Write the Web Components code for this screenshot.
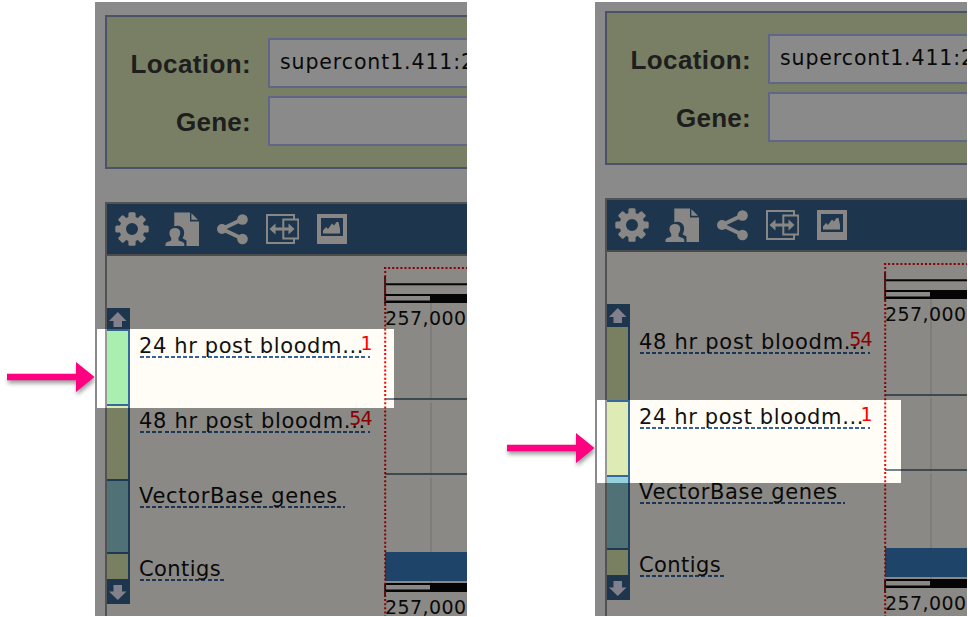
<!DOCTYPE html>
<html lang="en">
<head>
<meta charset="utf-8">
<title>Track ordering</title>
<style>
body { margin: 0; background: #fff; overflow: hidden; }
</style>
</head>
<body>
<track-comparison></track-comparison>
<script>
const sheet = (el, html) => { el.attachShadow({ mode: 'open' }).innerHTML = html; return el.shadowRoot; };

/* One line of text whose letter spacing is set so that it fills a given width. */
customElements.define('fit-text', class extends HTMLElement {
  connectedCallback() {
    const root = sheet(this, `<style>
      :host { display: block; white-space: pre; }
      span { display: inline-block; line-height: inherit; }
    </style><span></span>`);
    const span = root.querySelector('span');
    const text = this.getAttribute('text');
    span.textContent = text;
    const fit = parseFloat(this.getAttribute('fit'));
    span.style.letterSpacing = (fit - span.getBoundingClientRect().width) / text.length + 'px';
  }
});

customElements.define('form-field', class extends HTMLElement {
  connectedCallback() {
    sheet(this, `<style>
      :host { display: grid; grid-template: 50px / 144px 1fr; column-gap: 17px; height: 50px; }
      .label { display: flex; justify-content: flex-end; font: bold 26px/53px "Liberation Sans", sans-serif; color: #383838; }
      .input { border: 2px solid #afbcf8; background: #fff; padding-left: 10px; width: 400px; height: 50px; box-sizing: border-box;
               font: 20.500px/44px "DejaVu Sans", sans-serif; color: #111; }
    </style>
    <div class="label"><fit-text text="${this.getAttribute('label')}" fit="${this.getAttribute('fit')}"></fit-text></div>
    <div class="input"><slot></slot></div>`);
  }
});

customElements.define('location-form', class extends HTMLElement {
  connectedCallback() {
    sheet(this, `<style>
      :host { display: flex; flex-direction: column; gap: 8px; height: 154px; box-sizing: border-box;
              border: 2px solid #8998bd; border-right: 0; background: #dfebb9; padding-top: 21px; }
    </style>
    <form-field label="Location:" fit="120.5"><fit-text text="supercont1.411:2" fit="195"></fit-text></form-field>
    <form-field label="Gene:" fit="75"></form-field>`);
  }
});

customElements.define('tool-bar', class extends HTMLElement {
  connectedCallback() {
    const teeth = Array.from({ length: 8 }, (_, i) => `<rect x="13.4" y="0.3" width="7.2" height="8" rx="1.5" transform="rotate(${i * 45} 17 17)"/>`).join('');
    sheet(this, `<style>
      :host { display: flex; align-items: center; gap: 16px; height: 50px; padding-left: 8px; background: #36658f; }
      svg { flex: none; fill: #fdfaf5; stroke: none; }
    </style>
    <svg width="34" height="34">${teeth}<path fill-rule="evenodd" d="M17 4.5a12.5 12.5 0 1 0 0 25a12.5 12.5 0 1 0 0-25zM17 11a6 6 0 1 1 0 12a6 6 0 1 1 0-12z"/></svg>
    <svg width="34" height="34"><path d="M9.300.4H25v9.200h9V34H21.500v-5.500l-4-2.200c2.500-4 2.200-9-1-11.300-2-1.500-5-1.700-7.200-.8z"/><path d="M26.400 1.200 33 7.800h-6.600z"/><path d="M10 16c6 0 6.500 6 3.500 9.800v2.700c2 1 5.800 1.300 5.800 3.500v2H.5v-2c0-2.200 4-2.500 5.700-3.500v-2.700C3.200 22 4 16 10 16z"/></svg>
    <svg width="34" height="34"><path d="M7 17 28 7M7 17l21 10" stroke="#fdfaf5" stroke-width="4"/><circle cx="7" cy="17" r="5"/><circle cx="27.500" cy="7.500" r="5.300"/><circle cx="27.500" cy="27" r="5.300"/></svg>
    <svg width="34" height="34"><g fill="none" stroke="#fdfaf5" stroke-width="2"><path d="M29 7V3H2v28h27v-4"/><path d="M18.300 7.500h15v19h-15z"/></g><path d="m4.500 17 6-5.500v4h13v-4l6 5.500-6 5.500v-4h-13v4z"/></svg>
    <svg width="34" height="34"><path fill-rule="evenodd" d="M2 2h30v30H2zM6 6v18h22V6z"/><path d="M8 21.500v-3l3-3.500 2 2 4-5.500 2 2 2.500-3.500h2l1.500 7v4.500z"/></svg>`);
  }
});

customElements.define('order-strip', class extends HTMLElement {
  connectedCallback() {
    sheet(this, `<style>
      :host { display: flex; flex-direction: column; width: 23px; padding-top: 52px; }
      .end { height: 23px; background: #36658f; }
      .end.down { height: 25px; }
      svg { display: block; fill: #f1ecff; }
      .swatch { height: 73px; border-right: 2px solid #36699d; border-bottom: 2px solid #36699d; background: #dfebb4; }
      .swatch.genes { height: 71px; background: #95d2dc; }
      .swatch.contigs { height: 25px; border-bottom: 0; }
    </style>
    <div class="end"><svg width="23" height="23"><path d="M10.800 4 19.500 13H15v6H6.500v-6H2z"/></svg></div>
    <div class="swatch" style="background:${this.getAttribute('first')}"></div>
    <div class="swatch"></div>
    <div class="swatch genes"></div>
    <div class="swatch contigs"></div>
    <div class="end down"><svg width="23" height="25"><path d="M10.800 21 19.500 12.500H15V6H6.500v6.500H2z"/></svg></div>`);
  }
});

customElements.define('track-label', class extends HTMLElement {
  connectedCallback() {
    const count = this.getAttribute('count');
    sheet(this, `<style>
      :host { display: block; position: relative; height: 75px; font: 21px/26px "DejaVu Sans", sans-serif; color: #111; }
      .name { height: 25px; padding-left: 9px; line-height: 31px; }
      .line { margin-left: 10px; height: 2px; background: repeating-linear-gradient(90deg, #36609c 0 4px, transparent 4px 6.150px); }
      .count { position: absolute; right: 11px; top: -1px; font-size: 19px; line-height: 26px; letter-spacing: -.7px; color: #f00; }
    </style>
    <div class="name"><fit-text text="${this.getAttribute('name')}" fit="${this.getAttribute('fit')}"></fit-text></div>
    <div class="line" style="width:${this.getAttribute('line')}px"></div>
    ${count ? `<div class="count">${count}</div>` : ''}`);
  }
});

customElements.define('region-chart', class extends HTMLElement {
  connectedCallback() {
    const ruler = (y, ty) => `<path d="M2 ${y}h90v9h-90z" fill="#0a0a0a"/><path d="M3 ${y + 2}h44v4.500h-44z" fill="#fffdf6"/>
      <text x="2" y="${ty}" textLength="81">257,000</text>`;
    sheet(this, `<style>
      :host { display: block; }
      svg { display: block; }
      text { font: 19px "DejaVu Sans", sans-serif; fill: #111; }
    </style>
    <svg width="84" height="370">
      <path d="M48 46V327" stroke="#e2e0de" stroke-width="1.500"/>
      <path d="M2 143h82M2 218h82" stroke="#748592" stroke-width="2"/>
      <path d="M48 144.500v2M48 219.500v2" stroke="#fffdf6" stroke-width="2"/>
      <path d="M2 28.300h82" stroke="#0a0a0a" stroke-width="2"/>
      <path d="M2 20V48M2 328V341" stroke="#0a0a0a" stroke-width="1.500"/>
      ${ruler(38, 69)}
      <path d="M2 296h82v29H2z" fill="#397ec4"/>
      ${ruler(327, 357.500)}
      <path d="M1 12h83M2.200 11V370" stroke="#f00" stroke-width="2" stroke-dasharray="2 2.100" fill="none"/>
    </svg>`);
  }
});

customElements.define('track-viewer', class extends HTMLElement {
  connectedCallback() {
    sheet(this, `<style>
      :host { display: block; border: 2px solid #989898; border-right: 0; background: #fffdf6; }
      .rule { height: 2px; background: #8b8b8b; }
      .body { display: grid; grid-template-columns: 23px 253px 1fr; height: 380px; }
      .labels { padding-top: 75px; }
    </style>
    <tool-bar></tool-bar>
    <div class="rule"></div>
    <div class="body">
      <order-strip first="${this.getAttribute('first')}"></order-strip>
      <div class="labels"><slot></slot></div>
      <region-chart></region-chart>
    </div>`);
  }
});

/* A clipped screen with everything dimmed except one lit rectangle. */
customElements.define('browser-shot', class extends HTMLElement {
  connectedCallback() {
    const [x, y, w, h] = this.getAttribute('light').split(' ');
    sheet(this, `<style>
      :host { display: block; position: relative; overflow: hidden; width: 372px; height: 614px; box-sizing: border-box;
              background: #fff; padding: ${this.getAttribute('top')}px 0 0 10px; }
      track-viewer { margin-top: 33px; }
      .light { position: absolute; left: ${x}px; top: ${y}px; width: ${w}px; height: ${h}px; box-shadow: 0 0 0 900px rgba(0,0,0,.458); }
    </style>
    <location-form></location-form>
    <track-viewer first="${this.getAttribute('first')}"></track-viewer>
    <div class="light"></div>`);
    this.shadowRoot.querySelector('track-viewer').append(...this.childNodes);
  }
});

customElements.define('pointer-arrow', class extends HTMLElement {
  connectedCallback() {
    sheet(this, `<style>
      :host { display: block; width: 95px; height: 50px; }
      svg { display: block; overflow: visible; filter: drop-shadow(1px 3px 2px rgba(0,0,0,.4)); }
    </style><svg width="95" height="50"><path d="M7 21.700h69V10l18.500 15L76 40V28.300H7z" fill="#ff0080"/></svg>`);
  }
});

customElements.define('track-comparison', class extends HTMLElement {
  connectedCallback() {
    const a = '<track-label name="24 hr post bloodm..." fit="225" line="230" count="1"></track-label>';
    const b = '<track-label name="48 hr post bloodm..." fit="227" line="230" count="54"></track-label>';
    const rest = '<track-label name="VectorBase genes" fit="199" line="205" style="height:73px"></track-label><track-label name="Contigs" fit="82" line="86"></track-label>';
    sheet(this, `<style>
      :host { display: grid; grid-template-columns: 95px 405px 95px 372px; padding-top: 2px; height: 616px; box-sizing: border-box; }
      .first { margin-top: 350px; }
      .second { margin-top: 421px; }
    </style>
    <pointer-arrow class="first"></pointer-arrow>
    <browser-shot top="13" first="#aaefaf" light="2 327 297 79">${a}${b}${rest}</browser-shot>
    <pointer-arrow class="second"></pointer-arrow>
    <browser-shot top="9" first="#dfebb4" light="2 398 304 83">${b}${a}${rest}</browser-shot>`);
  }
});
</script>
</body>
</html>
